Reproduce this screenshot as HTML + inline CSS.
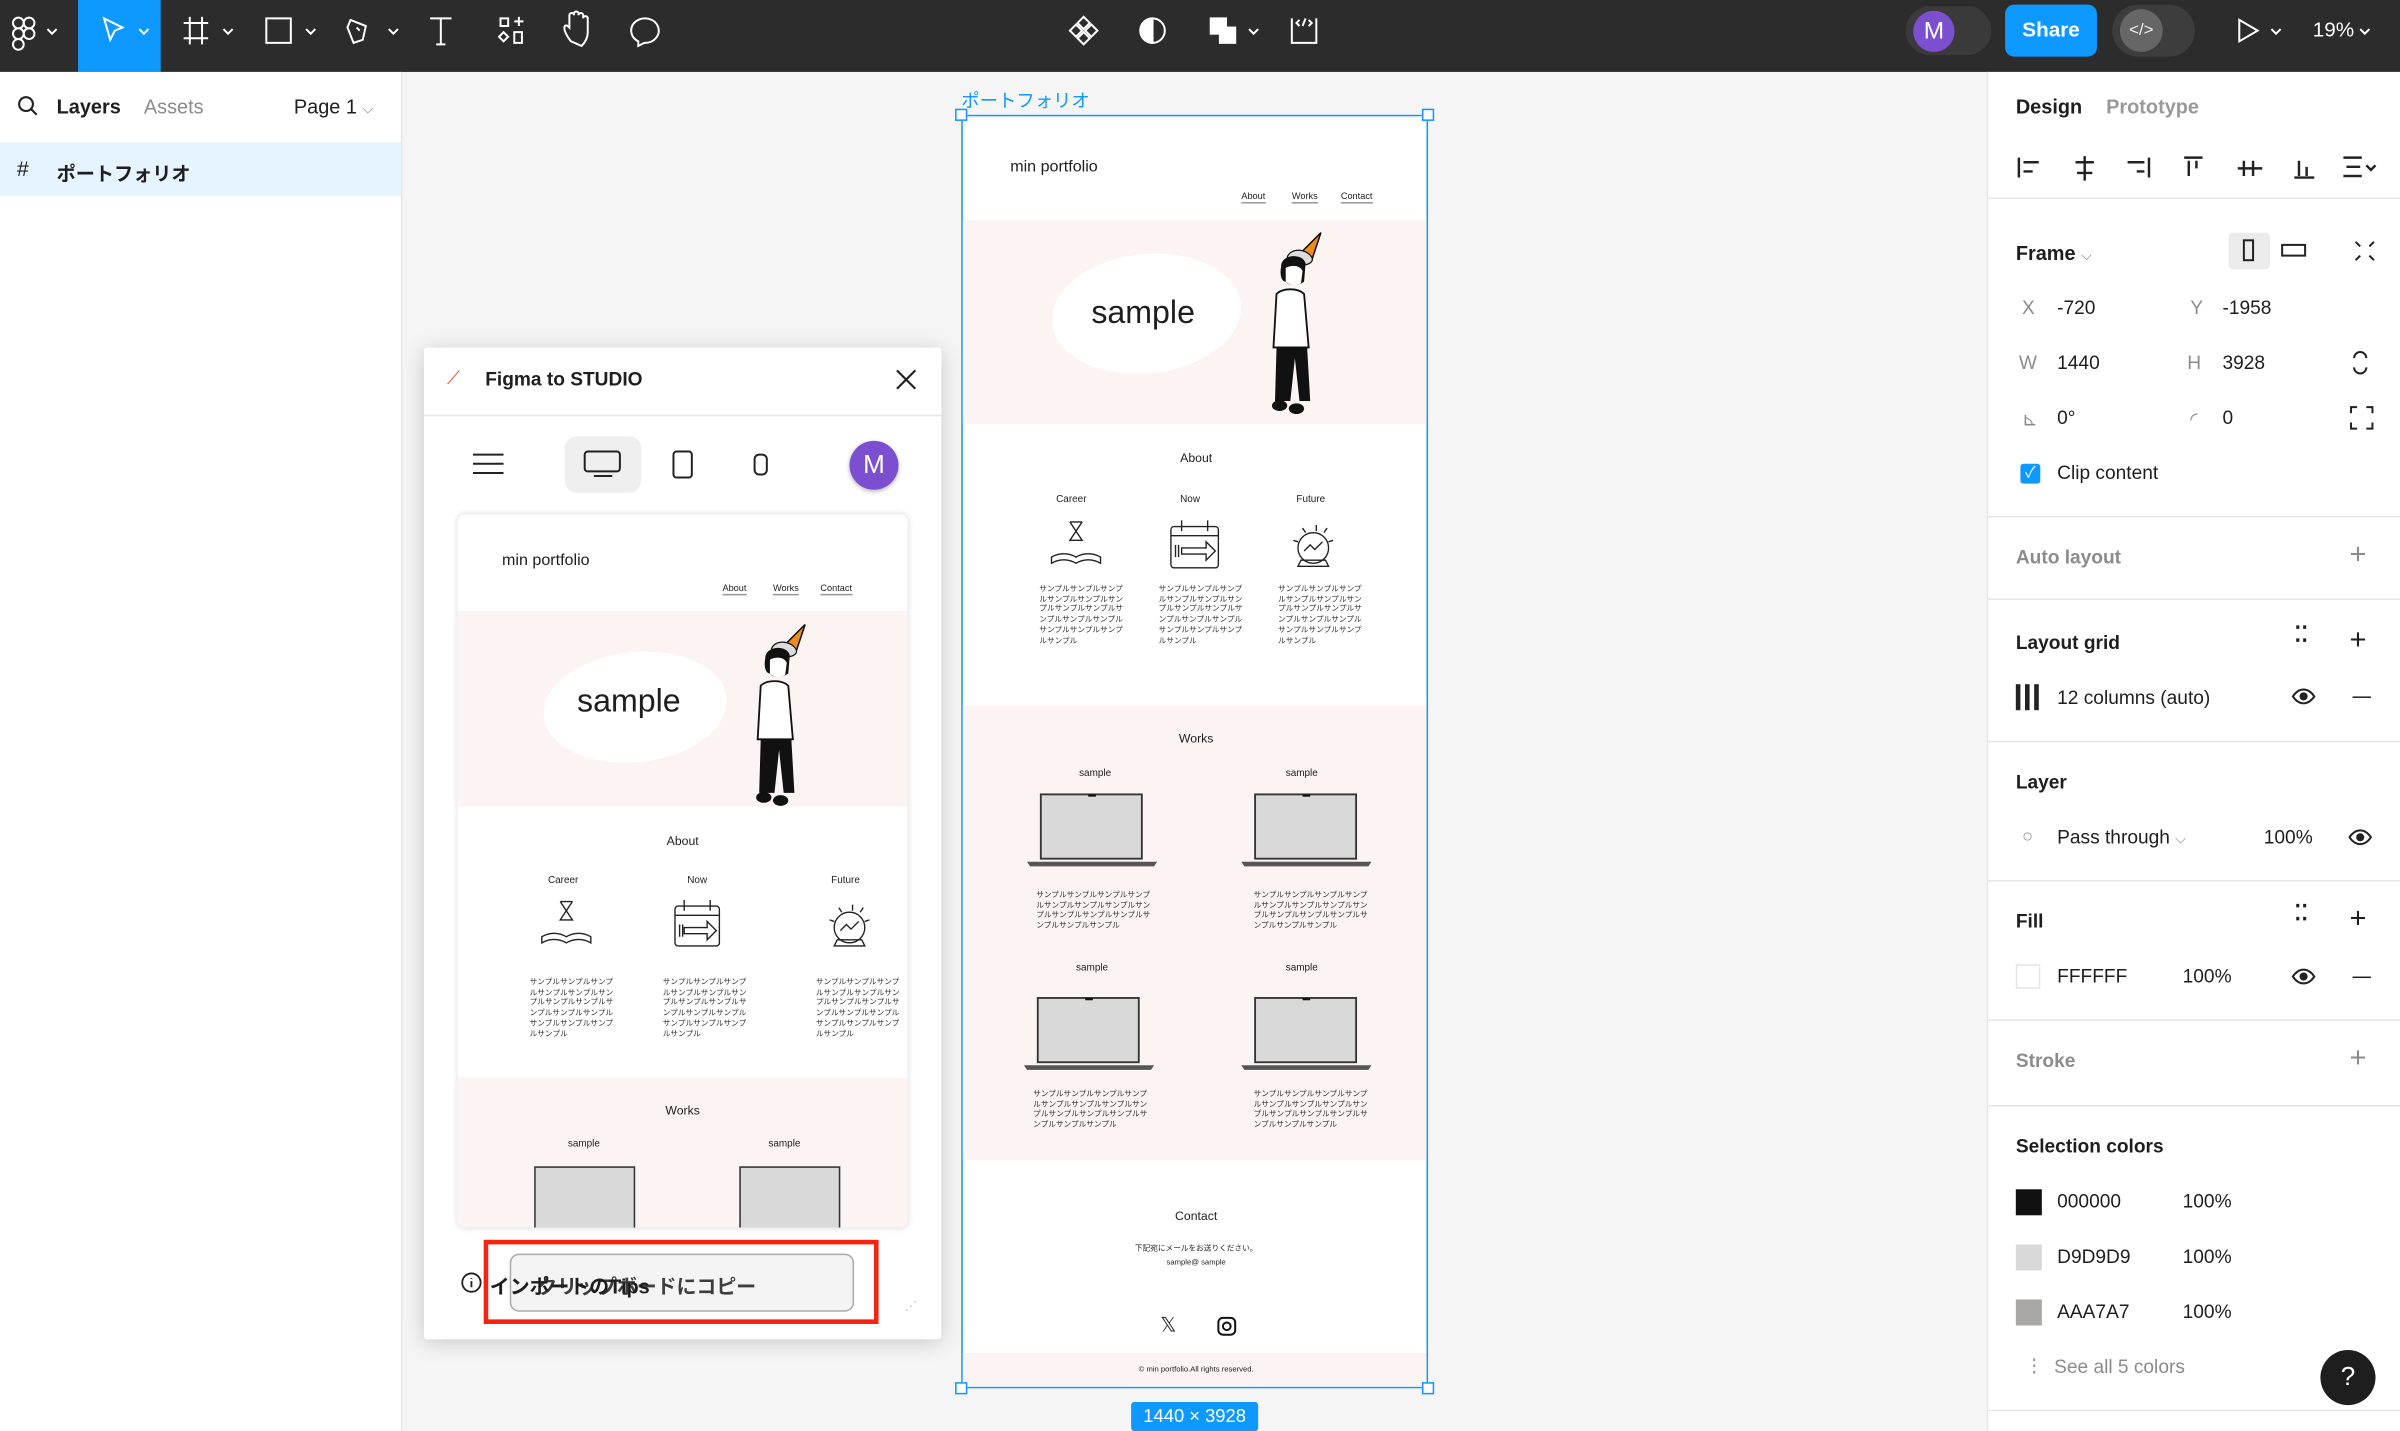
<!DOCTYPE html>
<html><head><meta charset="utf-8">
<style>
*{margin:0;padding:0;box-sizing:border-box}
html,body{width:2400px;height:1431px;overflow:hidden;background:#f5f5f5}
#w{position:absolute;left:0;top:0;width:1568px;height:935px;transform:scale(1.530613);transform-origin:0 0;font-family:"Liberation Sans","Noto Sans CJK JP",sans-serif;color:#1e1e1e}
.a{position:absolute}
.t{position:absolute;white-space:nowrap}
.bar{left:0;top:0;width:1568px;height:47px;background:#2c2c2c}
.ic{position:absolute;top:10px}
.lp{left:0;top:47px;width:263px;height:888px;background:#fff;border-right:1px solid #e6e6e6}
.rp{left:1298px;top:47px;width:270px;height:888px;background:#fff;border-left:1px solid #e6e6e6}
.div{position:absolute;left:0;width:270px;height:1px;background:#e6e6e6}
.pl{font-size:12.5px;font-weight:bold}
.pv{font-size:12.5px}
.g{color:#8c8c8c}
.sm{font-size:5px;line-height:6.7px;color:#333;white-space:normal;text-align:left}
.nav{font-size:6px;color:#222;border-bottom:.5px solid #999}
</style></head><body>
<div id="w">
<!-- top bar -->
<div class="a bar"></div>
<div class="a" style="left:51px;top:0;width:54px;height:47px;background:#0d99ff"></div>
<svg class="a" style="left:0;top:0" width="1568" height="47" fill="none" stroke="#fff" stroke-width="1.3">
<g><circle cx="12" cy="15" r="3.5"/><circle cx="19" cy="15" r="3.5"/><circle cx="12" cy="22" r="3.5"/><circle cx="19" cy="22" r="3.5"/><circle cx="12" cy="29" r="3.5"/></g>
<path d="M31 19l3 3 3-3M91 19l3 3 3-3M146 19l3 3 3-3M200 19l3 3 3-3M254 19l3 3 3-3M816 19l3 3 3-3M1484 19l3 3 3-3M1542 19l3 3 3-3"/>
<path d="M68 12l12 6-5 2-3 6z"/>
<path d="M124 11v18M132 11v18M120 15h16M120 25h16"/>
<rect x="174" y="12" width="16" height="16"/>
<path d="M229 13l10 4-2 9-6 2-4-10zM233 18l2 2"/>
<path d="M281 12h14M288 12v17M285 29h6"/>
<path d="M327 12h5v5h-5zM336 14h6M339 11v6M329 21l3 3-3 3-3-3zM336 21h5v7h-5z"/>
<path d="M373 27c-3-4-5-8-4-10 1-1 2 0 3 1v-8c0-2 3-2 3 0v-1c0-2 3-2 3 0v1c0-2 3-2 3 0v2c0-2 3-2 3 0v9c0 4-2 7-4 9z"/>
<path d="M417 27a9 8 0 1 1 4 1l-4 2z"/>
<path d="M708 11l4 4-4 4-4-4zM703 16l4 4-4 4-4-4zM713 16l4 4-4 4-4-4zM708 21l4 4-4 4-4-4z"/>
<circle cx="753" cy="20" r="8"/><path d="M753 12a8 8 0 0 0 0 16z" fill="#fff"/>
<rect x="791" y="12" width="10" height="10" fill="#fff"/><rect x="797" y="18" width="10" height="10" fill="#fff"/>
<path d="M844 12v16h16v-16M849 13l-2 2 2 2M855 13l2 2-2 2M853 12l-2 5"/>
<path d="M1463 13v14l12-7z"/>
</svg>
<div class="a" style="left:1245px;top:4px;width:56px;height:32px;border-radius:16px;background:#3a3a3a"></div>
<div class="a" style="left:1250px;top:7px;width:27px;height:27px;border-radius:50%;background:#7b4fd0;color:#fff;font-size:16px;text-align:center;line-height:27px">M</div>
<div class="a" style="left:1310px;top:3px;width:60px;height:34px;border-radius:6px;background:#0d99ff;color:#fff;font-size:13.5px;font-weight:bold;text-align:center;line-height:34px">Share</div>
<div class="a" style="left:1380px;top:3px;width:54px;height:34px;border-radius:17px;background:#3d3d3d"></div>
<div class="a" style="left:1385px;top:6px;width:28px;height:28px;border-radius:50%;background:#666;color:#eee;font-size:11px;text-align:center;line-height:28px">&lt;/&gt;</div>
<div class="t" style="left:1511px;top:12px;color:#fff;font-size:13.5px">19%</div>

<!-- left panel -->
<div class="a lp"></div>
<svg class="a" style="left:11px;top:62px" width="14" height="14" fill="none" stroke="#222" stroke-width="1.4"><circle cx="6" cy="6" r="4.5"/><path d="M9 9l4 4"/></svg>
<div class="t pl" style="left:37px;top:62px;font-size:13px">Layers</div>
<div class="t pv g" style="left:94px;top:62px;font-size:13px">Assets</div>
<div class="t pv" style="left:192px;top:62px;font-size:13px">Page 1 <span class="g" style="font-size:9px">⌵</span></div>
<div class="a" style="left:0;top:93px;width:262px;height:35px;background:#e5f4ff"></div>
<div class="t pv" style="left:11px;top:102px;font-size:14px">#</div>
<div class="t pl" style="left:37px;top:103px;font-size:12.5px">ポートフォリオ</div>

<!-- right panel -->
<div class="a rp">
<div class="t pl" style="left:18px;top:15px;font-size:13px">Design</div>
<div class="t pv g" style="left:77px;top:15px;font-size:13px;font-weight:bold;color:#999">Prototype</div>
<svg class="a" style="left:0;top:50px" width="270" height="30" fill="none" stroke="#222" stroke-width="1.6">
<path d="M20 6v13M23 9h10M23 15h6"/>
<path d="M63 5v16M57 9h12M58 16h10"/>
<path d="M105 6v13M91 9h11M97 15h5"/>
<path d="M128 6h12M131 8v10M136 8v5"/>
<path d="M163 13h16M167 8v10M173 8v10"/>
<path d="M200 19h13M203 8v10M208 12v6"/>
<path d="M232 6h12M234 12h9M232 18h12M247 11l3 3 3-3"/>
</svg>
<div class="div" style="top:82px"></div>
<div class="t pl" style="left:18px;top:111px;font-size:13px">Frame <span class="g" style="font-weight:normal;font-size:9px">⌵</span></div>
<div class="a" style="left:157px;top:105px;width:27px;height:24px;background:#ebebeb;border-radius:3px"></div>
<svg class="a" style="left:150px;top:105px" width="110" height="24" fill="none" stroke="#222" stroke-width="1.3"><rect x="17" y="5" width="6" height="13"/><rect x="42" y="8" width="15" height="7"/><path d="M90 6l3 3M102 6l-3 3M90 18l3-3M102 18l-3-3"/></svg>
<div class="t pv g" style="left:22px;top:147px">X</div><div class="t pv" style="left:45px;top:147px">-720</div>
<div class="t pv g" style="left:132px;top:147px">Y</div><div class="t pv" style="left:153px;top:147px">-1958</div>
<div class="t pv g" style="left:20px;top:183px">W</div><div class="t pv" style="left:45px;top:183px">1440</div>
<div class="t pv g" style="left:130px;top:183px">H</div><div class="t pv" style="left:153px;top:183px">3928</div>
<svg class="a" style="left:234px;top:180px" width="20" height="20" fill="none" stroke="#222" stroke-width="1.3"><path d="M5 7a4 4 0 0 1 8 0M5 13a4 4 0 0 0 8 0"/></svg>
<div class="t pv g" style="left:22px;top:219px">⊾</div><div class="t pv" style="left:45px;top:219px">0°</div>
<div class="t pv g" style="left:132px;top:219px">◜</div><div class="t pv" style="left:153px;top:219px">0</div>
<svg class="a" style="left:234px;top:216px" width="20" height="20" fill="none" stroke="#222" stroke-width="1.3"><path d="M3 7V3h4M13 3h4v4M17 13v4h-4M7 17H3v-4"/></svg>
<div class="a" style="left:21px;top:256px;width:13px;height:13px;background:#0d99ff;border-radius:2px;color:#fff;font-size:10px;line-height:13px;text-align:center">✓</div>
<div class="t pv" style="left:45px;top:255px">Clip content</div>
<div class="div" style="top:290px"></div>
<div class="t pl" style="left:18px;top:310px;color:#8c8c8c">Auto layout</div>
<div class="t g" style="left:236px;top:305px;font-size:19px;font-weight:200">+</div>
<div class="div" style="top:344px"></div>
<div class="t pl" style="left:18px;top:366px">Layout grid</div>
<div class="t" style="left:200px;top:359px;font-size:14px;font-weight:bold">⁚⁚</div>
<div class="t" style="left:236px;top:361px;font-size:19px">+</div>
<div class="a" style="left:18px;top:400px;width:3px;height:17px;background:#222"></div><div class="a" style="left:24px;top:400px;width:3px;height:17px;background:#222"></div><div class="a" style="left:30px;top:400px;width:3px;height:17px;background:#222"></div>
<div class="t pv" style="left:45px;top:402px">12 columns (auto)</div>
<svg class="a" style="left:198px;top:402px" width="16" height="12" fill="none" stroke="#222" stroke-width="1.3"><path d="M1 6c4-6 10-6 14 0c-4 6-10 6-14 0z"/><circle cx="8" cy="6" r="2" fill="#222"/></svg>
<div class="a" style="left:238px;top:408px;width:12px;height:1.3px;background:#222"></div>
<div class="div" style="top:437px"></div>
<div class="t pl" style="left:18px;top:457px">Layer</div>
<div class="t g" style="left:22px;top:492px;font-size:12px">○</div>
<div class="t pv" style="left:45px;top:493px">Pass through <span class="g" style="font-size:9px">⌵</span></div>
<div class="t pv" style="left:180px;top:493px">100%</div>
<svg class="a" style="left:235px;top:494px" width="16" height="12" fill="none" stroke="#222" stroke-width="1.3"><path d="M1 6c4-6 10-6 14 0c-4 6-10 6-14 0z"/><circle cx="8" cy="6" r="2" fill="#222"/></svg>
<div class="div" style="top:528px"></div>
<div class="t pl" style="left:18px;top:548px">Fill</div>
<div class="t" style="left:200px;top:541px;font-size:14px;font-weight:bold">⁚⁚</div>
<div class="t" style="left:236px;top:543px;font-size:19px">+</div>
<div class="a" style="left:18px;top:583px;width:16px;height:16px;border:1px solid #e6e6e6;background:#fff"></div>
<div class="t pv" style="left:45px;top:584px">FFFFFF</div>
<div class="t pv" style="left:127px;top:584px">100%</div>
<svg class="a" style="left:198px;top:585px" width="16" height="12" fill="none" stroke="#222" stroke-width="1.3"><path d="M1 6c4-6 10-6 14 0c-4 6-10 6-14 0z"/><circle cx="8" cy="6" r="2" fill="#222"/></svg>
<div class="a" style="left:238px;top:591px;width:12px;height:1.3px;background:#222"></div>
<div class="div" style="top:619px"></div>
<div class="t pl" style="left:18px;top:639px;color:#8c8c8c">Stroke</div>
<div class="t g" style="left:236px;top:634px;font-size:19px">+</div>
<div class="div" style="top:675px"></div>
<div class="t pl" style="left:18px;top:695px">Selection colors</div>
<div class="a" style="left:18px;top:730px;width:17px;height:17px;background:#111"></div>
<div class="t pv" style="left:45px;top:731px">000000</div><div class="t pv" style="left:127px;top:731px">100%</div>
<div class="a" style="left:18px;top:766px;width:17px;height:17px;background:#d9d9d9"></div>
<div class="t pv" style="left:45px;top:767px">D9D9D9</div><div class="t pv" style="left:127px;top:767px">100%</div>
<div class="a" style="left:18px;top:802px;width:17px;height:17px;background:#aaa7a7"></div>
<div class="t pv" style="left:45px;top:803px">AAA7A7</div><div class="t pv" style="left:127px;top:803px">100%</div>
<div class="t g" style="left:24px;top:838px;font-size:12px">⋮</div>
<div class="t pv g" style="left:43px;top:839px">See all 5 colors</div>
<div class="a" style="left:217px;top:835px;width:36px;height:36px;border-radius:50%;background:#1e1e1e;color:#fff;font-size:17px;text-align:center;line-height:36px">?</div>
<div class="div" style="top:874px"></div>
</div>

<!-- frame label -->
<div class="t" style="left:628px;top:57px;color:#0d99ff;font-size:12px">ポートフォリオ</div>

<!-- main frame -->
<div class="a" style="left:628px;top:75px;width:305px;height:832px;background:#fff;border:1px solid #0d99ff;overflow:hidden">
 <div class="t" style="left:31px;top:27px;font-size:10.5px">min portfolio</div>
 <div class="t nav" style="left:182px;top:50px">About</div><div class="t nav" style="left:215px;top:50px">Works</div><div class="t nav" style="left:247px;top:50px">Contact</div>
 <div class="a" style="left:0;top:68px;width:305px;height:133px;background:#fcf3f3"></div>
 <div class="a" style="left:58px;top:90px;width:124px;height:78px;background:#fff;border-radius:50%;transform:rotate(-6deg)"></div>
 <div class="t" style="left:84px;top:117px;font-size:21px">sample</div>
 <svg class="a" style="left:198px;top:72px" width="42" height="125" viewBox="0 0 42 125">
  <path d="M20 20l16-16-6 18z" fill="#f08c1e" stroke="#111" stroke-width="1"/>
  <path d="M14 20c2-6 12-6 16 0 2 4-4 6-10 5z" fill="#ddd" stroke="#111" stroke-width=".8"/>
  <path d="M10 26c0-8 14-9 16-2l-1 12c-4 3-10 3-12 0c-3 0-4-5-3-10z" fill="#111"/>
  <path d="M13 27c4-2 9-2 11 2l-1 8c-3 2-7 2-10-1z" fill="#fff"/>
  <path d="M7 44c4-4 14-4 18 0l3 35H5z" fill="#fff" stroke="#111" stroke-width="1.2"/>
  <path d="M7 79h20l2 35H22l-3-28-3 28H6z" fill="#111"/>
  <ellipse cx="9" cy="117" rx="5" ry="3.5" fill="#111"/><ellipse cx="20" cy="119" rx="5" ry="3.5" fill="#111"/>
 </svg>
 <div class="t" style="left:0;width:305px;text-align:center;top:219px;font-size:8px">About</div>
 <div class="t" style="left:61px;top:247px;font-size:6.5px">Career</div>
 <div class="t" style="left:142px;top:247px;font-size:6.5px">Now</div>
 <div class="t" style="left:218px;top:247px;font-size:6.5px">Future</div>
 <svg class="a" style="left:55px;top:262px" width="230" height="36" fill="none" stroke="#222" stroke-width=".9">
  <path d="M15 3h8M15 3l4 6-4 6h8l-4-6 4-6M15 3v0M3 26c5-3 11-3 16 0c5-3 11-3 16 0v4c-5-3-11-3-16 0c-5-3-11-3-16 0z"/>
  <rect x="81" y="6" width="31" height="27" rx="2"/><path d="M81 12h31M88 2v7M105 2v7M88 20h16v-4l6 6-6 6v-4H88zM84 18v8M86 18v8"/>
  <circle cx="174" cy="20" r="10"/><path d="M166 28h16l2 4h-20zM168 22l4-4 3 3 5-5M176 5v4M167 7l2 3M183 7l-2 3M161 15l3 1M187 15l-3 1"/>
 </svg>
 <div class="a sm" style="left:50px;top:306px;width:55px">サンプルサンプルサンプルサンプルサンプルサンプルサンプルサンプルサンプルサンプルサンプルサンプルサンプルサンプルサンプル</div>
 <div class="a sm" style="left:128px;top:306px;width:55px">サンプルサンプルサンプルサンプルサンプルサンプルサンプルサンプルサンプルサンプルサンプルサンプルサンプルサンプルサンプル</div>
 <div class="a sm" style="left:206px;top:306px;width:55px">サンプルサンプルサンプルサンプルサンプルサンプルサンプルサンプルサンプルサンプルサンプルサンプルサンプルサンプルサンプル</div>
 <div class="a" style="left:0;top:385px;width:305px;height:297px;background:#fcf3f3"></div>
 <div class="t" style="left:0;width:305px;text-align:center;top:402px;font-size:8px">Works</div>
 <div class="t" style="left:76px;top:426px;font-size:6.5px">sample</div><div class="t" style="left:211px;top:426px;font-size:6.5px">sample</div>
 <div class="t" style="left:74px;top:553px;font-size:6.5px">sample</div><div class="t" style="left:211px;top:553px;font-size:6.5px">sample</div>
 <svg class="a" style="left:40px;top:441px" width="230" height="55"><g id="lp"><rect x="11" y="2" width="66" height="42" fill="#d9d9d9" stroke="#333" stroke-width="1.2"/><rect x="42" y="2" width="5" height="1.5" fill="#111"/><path d="M2 46h85l-2 3H4z" fill="#555"/></g><g transform="translate(140,0)"><rect x="11" y="2" width="66" height="42" fill="#d9d9d9" stroke="#333" stroke-width="1.2"/><rect x="42" y="2" width="5" height="1.5" fill="#111"/><path d="M2 46h85l-2 3H4z" fill="#555"/></g></svg>
 <svg class="a" style="left:38px;top:574px" width="230" height="55"><g><rect x="11" y="2" width="66" height="42" fill="#d9d9d9" stroke="#333" stroke-width="1.2"/><rect x="42" y="2" width="5" height="1.5" fill="#111"/><path d="M2 46h85l-2 3H4z" fill="#555"/></g><g transform="translate(142,0)"><rect x="11" y="2" width="66" height="42" fill="#d9d9d9" stroke="#333" stroke-width="1.2"/><rect x="42" y="2" width="5" height="1.5" fill="#111"/><path d="M2 46h85l-2 3H4z" fill="#555"/></g></svg>
 <div class="a sm" style="left:48px;top:506px;width:78px">サンプルサンプルサンプルサンプルサンプルサンプルサンプルサンプルサンプルサンプルサンプルサンプルサンプルサンプル</div>
 <div class="a sm" style="left:190px;top:506px;width:78px">サンプルサンプルサンプルサンプルサンプルサンプルサンプルサンプルサンプルサンプルサンプルサンプルサンプルサンプル</div>
 <div class="a sm" style="left:46px;top:636px;width:78px">サンプルサンプルサンプルサンプルサンプルサンプルサンプルサンプルサンプルサンプルサンプルサンプルサンプルサンプル</div>
 <div class="a sm" style="left:190px;top:636px;width:78px">サンプルサンプルサンプルサンプルサンプルサンプルサンプルサンプルサンプルサンプルサンプルサンプルサンプルサンプル</div>
 <div class="t" style="left:0;width:305px;text-align:center;top:714px;font-size:8px">Contact</div>
 <div class="t" style="left:0;width:305px;text-align:center;top:736px;font-size:5px">下記宛にメールをお送りください。</div>
 <div class="t" style="left:0;width:305px;text-align:center;top:746px;font-size:5px">sample@ sample</div>
 <div class="t" style="left:129px;top:782px;font-size:13px">𝕏</div>
 <svg class="a" style="left:166px;top:784px" width="13" height="13" fill="none" stroke="#111" stroke-width="1.3"><rect x="1" y="1" width="11" height="11" rx="3"/><circle cx="6.5" cy="6.5" r="2.5"/></svg>
 <div class="a" style="left:0;top:808px;width:305px;height:24px;background:#fcf3f3"></div>
 <div class="t" style="left:0;width:305px;text-align:center;top:816px;font-size:5px">© min portfolio.All rights reserved.</div>
</div>
<div class="a" style="left:624px;top:71px;width:8px;height:8px;background:#fff;border:1px solid #0d99ff"></div>
<div class="a" style="left:929px;top:71px;width:8px;height:8px;background:#fff;border:1px solid #0d99ff"></div>
<div class="a" style="left:624px;top:903px;width:8px;height:8px;background:#fff;border:1px solid #0d99ff"></div>
<div class="a" style="left:929px;top:903px;width:8px;height:8px;background:#fff;border:1px solid #0d99ff"></div>
<div class="a" style="left:739px;top:916px;width:83px;height:19px;background:#0d99ff;color:#fff;font-size:12px;text-align:center;line-height:19px;border-radius:2px">1440 × 3928</div>

<!-- plugin window -->
<div class="a" style="left:277px;top:227px;width:338px;height:648px;background:#fff;box-shadow:0 2px 14px rgba(0,0,0,.18);border-radius:2px;overflow:hidden">
 <div class="t" style="left:15px;top:13px;color:#f24822;font-size:12px">⟋</div>
 <div class="t" style="left:40px;top:14px;font-size:12.5px;font-weight:bold">Figma to STUDIO</div>
 <svg class="a" style="left:308px;top:14px" width="14" height="14" stroke="#222" stroke-width="1.4"><path d="M1 1l12 12M13 1L1 13"/></svg>
 <div class="a" style="left:0;top:44px;width:338px;height:1px;background:#e6e6e6"></div>
 <svg class="a" style="left:32px;top:68px" width="20" height="16" stroke="#222" stroke-width="1.3"><path d="M0 2h20M0 8h20M0 14h20"/></svg>
 <div class="a" style="left:92px;top:58px;width:50px;height:37px;background:#efefef;border-radius:8px"></div>
 <svg class="a" style="left:104px;top:66px" width="26" height="20" fill="none" stroke="#222" stroke-width="1.3"><rect x="1" y="2" width="23" height="13" rx="2"/><path d="M7 18h12"/></svg>
 <svg class="a" style="left:161px;top:67px" width="16" height="20" fill="none" stroke="#222" stroke-width="1.3"><rect x="2" y="1" width="12" height="17" rx="2"/></svg>
 <svg class="a" style="left:214px;top:69px" width="12" height="16" fill="none" stroke="#222" stroke-width="1.3"><rect x="2" y="1" width="8" height="13" rx="3"/></svg>
 <div class="a" style="left:278px;top:61px;width:32px;height:32px;border-radius:50%;background:#7b4fd0;color:#fff;font-size:17px;text-align:center;line-height:32px;box-shadow:0 1px 3px rgba(0,0,0,.3)">M</div>
 <div class="a" style="left:22px;top:109px;width:294px;height:466px;background:#fff;border-radius:5px;box-shadow:0 0 4px rgba(0,0,0,.15);overflow:hidden">
  <div class="t" style="left:29px;top:24px;font-size:10.5px">min portfolio</div>
  <div class="t nav" style="left:173px;top:46px">About</div><div class="t nav" style="left:206px;top:46px">Works</div><div class="t nav" style="left:237px;top:46px">Contact</div>
  <div class="a" style="left:0;top:63px;width:294px;height:128px;background:#fcf3f3"></div>
  <div class="a" style="left:56px;top:90px;width:120px;height:72px;background:#fff;border-radius:50%;transform:rotate(-6deg)"></div>
  <div class="t" style="left:78px;top:111px;font-size:21px">sample</div>
  <svg class="a" style="left:191px;top:68px" width="42" height="125" viewBox="0 0 42 125">
   <path d="M20 20l16-16-6 18z" fill="#f08c1e" stroke="#111" stroke-width="1"/>
   <path d="M14 20c2-6 12-6 16 0 2 4-4 6-10 5z" fill="#ddd" stroke="#111" stroke-width=".8"/>
   <path d="M10 26c0-8 14-9 16-2l-1 12c-4 3-10 3-12 0c-3 0-4-5-3-10z" fill="#111"/>
   <path d="M13 27c4-2 9-2 11 2l-1 8c-3 2-7 2-10-1z" fill="#fff"/>
   <path d="M7 44c4-4 14-4 18 0l3 35H5z" fill="#fff" stroke="#111" stroke-width="1.2"/>
   <path d="M7 79h20l2 35H22l-3-28-3 28H6z" fill="#111"/>
   <ellipse cx="9" cy="117" rx="5" ry="3.5" fill="#111"/><ellipse cx="20" cy="119" rx="5" ry="3.5" fill="#111"/>
  </svg>
  <div class="t" style="left:0;width:294px;text-align:center;top:209px;font-size:8px">About</div>
  <div class="t" style="left:59px;top:236px;font-size:6.5px">Career</div>
  <div class="t" style="left:150px;top:236px;font-size:6.5px">Now</div>
  <div class="t" style="left:244px;top:236px;font-size:6.5px">Future</div>
  <svg class="a" style="left:52px;top:250px" width="240" height="36" fill="none" stroke="#222" stroke-width=".9">
   <path d="M15 3h8M15 3l4 6-4 6h8l-4-6 4-6M3 26c5-3 11-3 16 0c5-3 11-3 16 0v4c-5-3-11-3-16 0c-5-3-11-3-16 0z"/>
   <rect x="90" y="6" width="29" height="26" rx="2"/><path d="M90 12h29M96 2v7M113 2v7M96 20h15v-4l6 6-6 6v-4H96zM93 18v8M95 18v8"/>
   <circle cx="204" cy="20" r="10"/><path d="M196 28h16l2 4h-20zM198 22l4-4 3 3 5-5M206 5v4M197 7l2 3M213 7l-2 3M191 15l3 1M217 15l-3 1"/>
  </svg>
  <div class="a sm" style="left:47px;top:303px;width:55px">サンプルサンプルサンプルサンプルサンプルサンプルサンプルサンプルサンプルサンプルサンプルサンプルサンプルサンプルサンプル</div>
  <div class="a sm" style="left:134px;top:303px;width:55px">サンプルサンプルサンプルサンプルサンプルサンプルサンプルサンプルサンプルサンプルサンプルサンプルサンプルサンプルサンプル</div>
  <div class="a sm" style="left:234px;top:303px;width:55px">サンプルサンプルサンプルサンプルサンプルサンプルサンプルサンプルサンプルサンプルサンプルサンプルサンプルサンプルサンプル</div>
  <div class="a" style="left:0;top:368px;width:294px;height:100px;background:#fcf3f3"></div>
  <div class="t" style="left:0;width:294px;text-align:center;top:385px;font-size:8px">Works</div>
  <div class="t" style="left:72px;top:408px;font-size:6.5px">sample</div><div class="t" style="left:203px;top:408px;font-size:6.5px">sample</div>
  <div class="a" style="left:50px;top:426px;width:66px;height:45px;background:#d9d9d9;border:1.2px solid #333"></div>
  <div class="a" style="left:184px;top:426px;width:66px;height:45px;background:#d9d9d9;border:1.2px solid #333"></div>
 </div>
 <svg class="a" style="left:24px;top:604px" width="14" height="14" fill="none" stroke="#222" stroke-width="1.2"><circle cx="7" cy="7" r="6"/><path d="M7 6v4M7 4v.5"/></svg>
 <div class="a" style="left:56px;top:592px;width:225px;height:38px;border:1px solid #aaa;border-radius:6px;background:#f4f4f4"></div>
 <div class="t" style="left:43px;top:603px;font-size:13px;font-weight:bold">インポートのTips</div>
 <div class="t" style="left:74px;top:603px;font-size:13px;font-weight:bold;opacity:.85">クリップボードにコピー</div>
 <div class="a" style="left:39px;top:583px;width:258px;height:55px;border:3px solid #f5230f"></div>
 <div class="t" style="left:314px;top:622px;color:#bbb;font-size:8px">⋰</div>
</div>
</div>
</body></html>
